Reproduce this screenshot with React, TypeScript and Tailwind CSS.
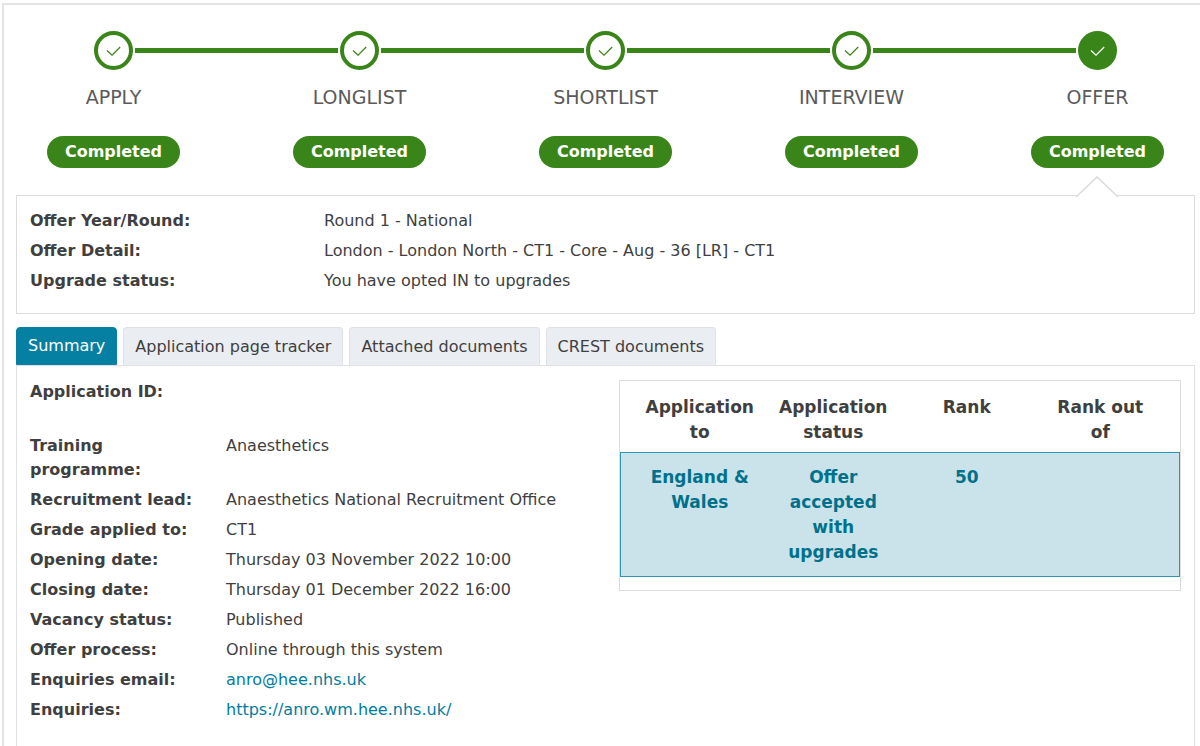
import { useState } from "react"

const steps = ["APPLY", "LONGLIST", "SHORTLIST", "INTERVIEW", "OFFER"]

const offer = [
  ["Offer Year/Round:", "Round 1 - National"],
  ["Offer Detail:", "London - London North - CT1 - Core - Aug - 36 [LR] - CT1"],
  ["Upgrade status:", "You have opted IN to upgrades"],
]

const tabs = ["Summary", "Application page tracker", "Attached documents", "CREST documents"]

const details = [
  { label: "Training programme:", value: "Anaesthetics" },
  { label: "Recruitment lead:", value: "Anaesthetics National Recruitment Office" },
  { label: "Grade applied to:", value: "CT1" },
  { label: "Opening date:", value: "Thursday 03 November 2022 10:00" },
  { label: "Closing date:", value: "Thursday 01 December 2022 16:00" },
  { label: "Vacancy status:", value: "Published" },
  { label: "Offer process:", value: "Online through this system" },
  { label: "Enquiries email:", value: "anro@hee.nhs.uk", href: "mailto:anro@hee.nhs.uk" },
  { label: "Enquiries:", value: "https://anro.wm.hee.nhs.uk/", href: "https://anro.wm.hee.nhs.uk/" },
]

function Tick() {
  return (
    <svg width="15" height="11" viewBox="0 0 15 11" fill="none" stroke="currentColor" aria-hidden="true">
      <path d="M1 5.5l5 4.7L14.2 2" strokeWidth="1.2" />
    </svg>
  )
}

function Step({ name, last }: { name: string; last: boolean }) {
  return (
    <li className={last ? "w-[133px]" : "flex-1"}>
      <div className={last ? "ml-[47px] flex items-center" : "-mr-[45px] ml-[47px] flex items-center gap-0.5"}>
        <span
          className={
            last
              ? "flex size-[39px] items-center justify-center rounded-full bg-[#3a8519] text-white"
              : "flex size-[39px] items-center justify-center rounded-full border-4 border-[#3a8519] text-[#3a8519]"
          }
        >
          <Tick />
        </span>
        {!last && <span className="h-[5px] flex-1 bg-[#3a8519]" />}
      </div>
      <div className="flex w-[133px] flex-col items-center">
        <span className="mt-3.5 text-[19px] leading-[26px] text-[#5a5a5a]">{name}</span>
        <span className="mt-[26px] w-full rounded-full bg-[#3a8519] text-center text-[16px] leading-8 font-bold text-white">
          Completed
        </span>
      </div>
    </li>
  )
}

function RankTable() {
  return (
    <div className="border border-[#dcdcdc] pb-[13px]">
      <table className="w-full table-fixed border-separate border-spacing-0 text-center text-[17px] leading-[25px] font-bold">
        <thead>
          <tr className="align-top">
            <th className="w-[13px]" />
            <th className="px-2 pt-3.5 pb-[7px]">Application to</th>
            <th className="px-2 pt-3.5 pb-[7px]">Application status</th>
            <th className="px-2 pt-3.5 pb-[7px]">Rank</th>
            <th className="px-5 pt-3.5 pb-[7px]">Rank out of</th>
            <th className="w-[13px]" />
          </tr>
        </thead>
        <tbody className="text-[#00718b]">
          <tr className="bg-[#cae3ea] align-top *:border-y *:border-[#2b98b5]">
            <td className="border-l" />
            <td className="px-2 pt-3 pb-[11px]">England &amp; Wales</td>
            <td className="px-4 pt-3 pb-[11px]">Offer accepted with upgrades</td>
            <td className="px-2 pt-3 pb-[11px]">50</td>
            <td />
            <td className="border-r" />
          </tr>
        </tbody>
      </table>
    </div>
  )
}

export default function App() {
  const [active, setActive] = useState(tabs[0])

  return (
    <div className="min-h-screen bg-white pt-[3px] pl-0.5 font-['DejaVu_Sans',Verdana,sans-serif] text-[16px] leading-6 text-[#3f3f3f]">
      <main className="min-h-[743px] border-t-2 border-l-2 border-[#e4e4e4] pr-[5px] pl-3">
        <ol className="flex pt-[26px] pr-[31px] pl-[31px]">
          {steps.map((name, i) => (
            <Step key={name} name={name} last={i === steps.length - 1} />
          ))}
        </ol>

        <section className="relative mt-[27px] border border-[#dcdcdc] px-[13px] pt-[13px] pb-3.5">
          <svg className="absolute -top-5 right-[76px]" width="42" height="22" viewBox="0 0 42 22" aria-hidden="true">
            <path d="M0 21L21 1l21 20" fill="#fff" stroke="#dcdcdc" strokeWidth="1.6" />
          </svg>
          <dl>
            {offer.map(([label, value]) => (
              <div key={label} className="flex pb-1.5">
                <dt className="w-[294px] shrink-0 font-bold">{label}</dt>
                <dd>{value}</dd>
              </div>
            ))}
          </dl>
        </section>

        <div role="tablist" className="mt-[13px] flex gap-1.5">
          {tabs.map((tab) => (
            <button
              key={tab}
              type="button"
              role="tab"
              aria-selected={active === tab}
              onClick={() => setActive(tab)}
              className={
                active === tab
                  ? "h-[38px] rounded-t border border-[#0580a2] bg-[#0580a2] px-[11px] text-white"
                  : "h-[38px] rounded-t border border-b-0 border-[#dfe1e5] bg-[#eaedf2] px-[11px]"
              }
            >
              {tab}
            </button>
          ))}
        </div>

        <section className="flex min-h-[381px] items-start border border-b-0 border-[#e0e1e4] px-[13px] pt-3.5">
          <dl className="flex-1">
            <div className="flex min-h-[54px]">
              <dt className="w-[180px] shrink-0 font-bold">Application ID:</dt>
              <dd />
            </div>
            {details.map(({ label, value, href }) => (
              <div key={label} className="flex pb-1.5">
                <dt className="mr-4 w-[180px] shrink-0 font-bold">{label}</dt>
                <dd>
                  {href ? (
                    <a href={href} className="text-[#007c9f]">
                      {value}
                    </a>
                  ) : (
                    value
                  )}
                </dd>
              </div>
            ))}
          </dl>
          <div className="w-[562px]">
            <RankTable />
          </div>
        </section>
      </main>
    </div>
  )
}
